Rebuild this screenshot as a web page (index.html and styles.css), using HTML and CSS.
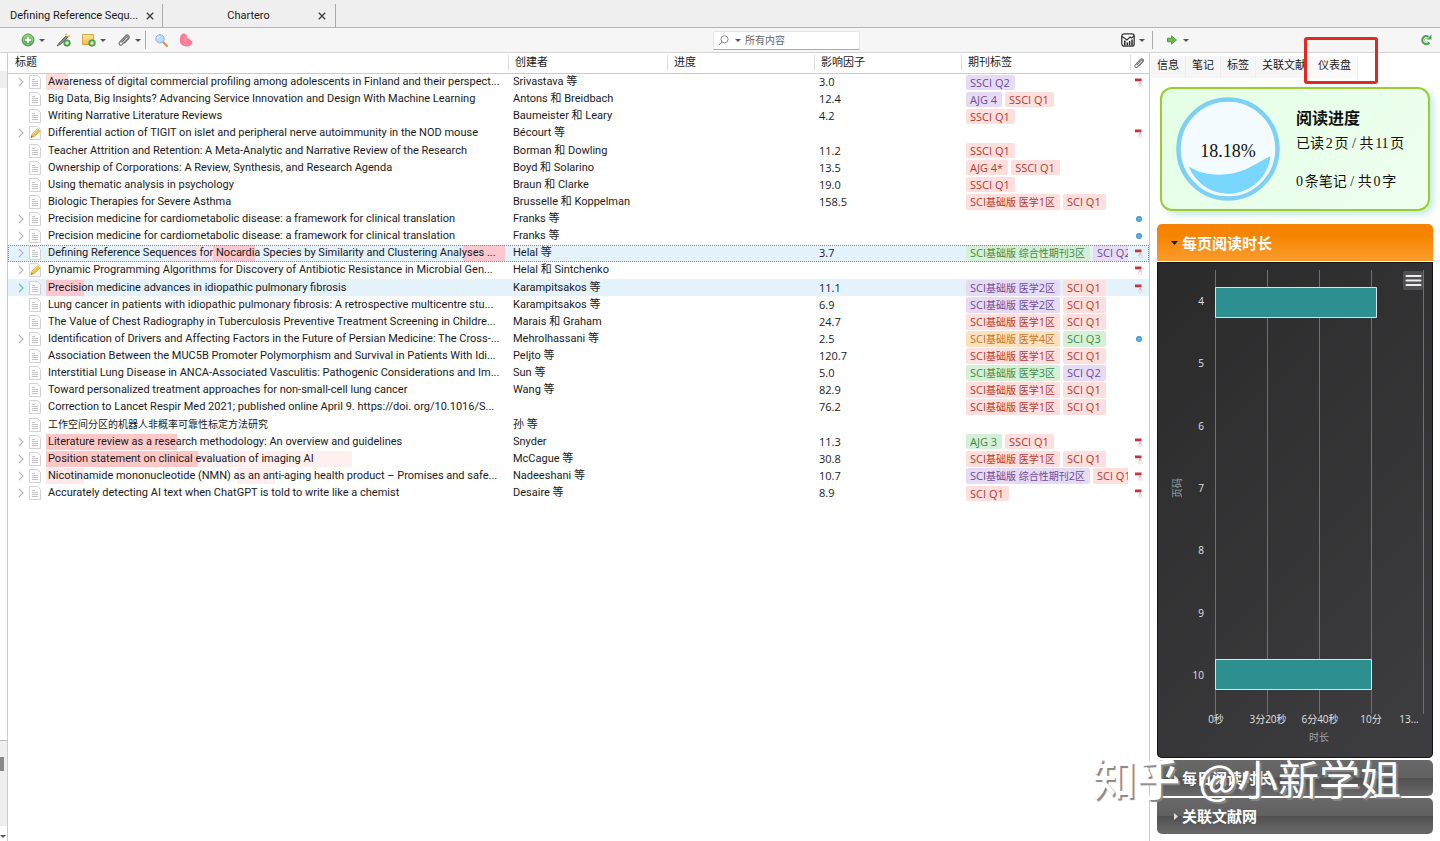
FILE: index.html
```html
<!DOCTYPE html>
<html lang="zh-CN">
<head>
<meta charset="utf-8">
<title>Chartero</title>
<link rel="stylesheet" href="styles.css">
</head>
<body>
<svg class="defs" aria-hidden="true">
  <defs>
    <linearGradient id="gGreen" x1="0" y1="0" x2="0" y2="1"><stop offset="0" stop-color="#8ccf7c"/><stop offset="1" stop-color="#3d9440"/></linearGradient>
    <linearGradient id="gNote" x1="0" y1="0" x2="0" y2="1"><stop offset="0" stop-color="#fbe9a4"/><stop offset="1" stop-color="#efbb45"/></linearGradient>
  </defs>
  <symbol id="doc" viewBox="0 0 12 14"><path d="M.5.5h8l3 3v10H.5z" fill="#fcfcfc" stroke="#d2d2d2"/><path d="M3 4.500h3M3 6.500h6M3 8.500h6M3 10.500h6" stroke="#c2c2c2"/></symbol>
  <symbol id="pen" viewBox="0 0 12 14"><path d="M.5.5h8l3 3v10H.5z" fill="#fbfbfb" stroke="#d2d2d2"/><path d="M2 11.500l1-3.500 5.500-5.500 2.500 2.500-5.500 5.500z" fill="#f3c044" stroke="#d9a744" stroke-width=".7"/><path d="M3.500 8.500l5.500-5.500" stroke="#fbe39a"/><path d="M2 11.500l1.800-.5-1.300-1.300z" fill="#555"/></symbol>
  <symbol id="chev" viewBox="0 0 6 10"><path d="M1 1l4 4-4 4" fill="none" stroke="currentColor" stroke-width="1.100"/></symbol>
  <symbol id="pdf" viewBox="0 0 8 10"><path d="M0 1.500h6.500v2.800H0z" fill="#c8343a"/><path d="M5 4.300c.3 1.700-.5 2.500-1.500 3.500M5 5c.5 1.500 1 2 2 2" fill="none" stroke="#ea9a9a" stroke-width=".9"/><path d="M3 9h5" stroke="#d4d4d4" stroke-width=".8"/></symbol>
  <symbol id="dot" viewBox="0 0 8 8"><circle cx="4" cy="4" r="3" fill="#3d9ad8"/><path d="M2.500 3.500h3M2.500 5h3" stroke="#a5d3f2" stroke-width=".7"/></symbol>
  <symbol id="clip" viewBox="0 0 14 14"><path d="M4.500 9.500l5-5.500c1-1 2.400.2 1.500 1.300l-6 6.400c-1.500 1.500-3.900-.6-2.500-2.200l6-6.700c2-2 5 .6 3.200 2.700l-4.200 4.700" fill="none" stroke="#777" stroke-width="1.200"/></symbol>
  <symbol id="close" viewBox="0 0 8 8"><path d="M.8.8l6.400 6.400M7.200.8L.8 7.200" stroke="#444" stroke-width="1.400"/></symbol>
</svg>

<nav class="tabs">
  <div class="tab tab-first"><a href="#ref">Defining Reference Sequ...</a><button aria-label="关闭"><svg width="8" height="8"><use href="#close"/></svg></button></div>
  <div class="tab"><a href="#chartero">Chartero</a><button aria-label="关闭"><svg width="8" height="8"><use href="#close"/></svg></button></div>
</nav>

<header class="toolbar">
  <div class="tools">
    <button class="tool menu" aria-label="新建条目"><svg width="14" height="14" viewBox="0 0 14 14"><circle cx="7" cy="7" r="6" fill="url(#gGreen)" stroke="#4c9a4c"/><circle cx="7" cy="7" r="4.500" fill="none" stroke="#b7e2ae" stroke-width=".7"/><path d="M7 4v6M4 7h6" stroke="#fff" stroke-width="1.800"/></svg></button>
    <button class="tool" aria-label="添加条目"><svg width="15" height="14" viewBox="0 0 15 14"><path d="M1 13l2-3 7-7 2 1-7 7z" fill="#8b8b7e" stroke="#555" stroke-width=".7"/><path d="M9 2l2-1.500M12 4l2-1.500" stroke="#e5c04b" stroke-width="1.300"/><circle cx="11" cy="10" r="3.300" fill="#5aae50" stroke="#3b8a3c" stroke-width=".7"/><path d="M11 8.200v3.600M9.200 10h3.600" stroke="#fff" stroke-width="1.100"/></svg></button>
    <button class="tool menu" aria-label="新建笔记"><svg width="14" height="14" viewBox="0 0 14 14"><path d="M.5 1.500h11v10H.5z" fill="url(#gNote)" stroke="#d8a63c"/><circle cx="10" cy="10" r="3.300" fill="#5aae50" stroke="#3b8a3c" stroke-width=".7"/><path d="M10 8.200v3.600M8.200 10h3.600" stroke="#fff" stroke-width="1.100"/></svg></button>
    <button class="tool menu" aria-label="添加附件"><svg width="14" height="14"><use href="#clip"/></svg></button>
    <span class="sep"></span>
    <button class="tool" aria-label="高级搜索"><svg width="13" height="13" viewBox="0 0 13 13"><path d="M8 8l4 4" stroke="#d59a52" stroke-width="2.400" stroke-linecap="round"/><circle cx="5" cy="4.800" r="4.200" fill="#b9dcf8" stroke="#8cb6e4"/><path d="M2.800 4.500c0-1.400 1-2 2.200-2" fill="none" stroke="#fff"/></svg></button>
    <button class="tool" aria-label="插件"><svg width="14" height="14" viewBox="0 0 14 14"><path d="M3.500.8C6.500-.2 8.500 2 8 5c2 .3 5.500 2.500 5.500 5-1.500 2.500-3.500 3.700-6 3.500C3.500 13.300.8 11 .8 7.500c0-3 .7-5.700 2.700-6.700z" fill="#fb7d97"/><path d="M8 5C6.500 5.500 5.500 7 6.500 9" stroke="#fda7b8" fill="none"/></svg></button>
  </div>
  <label class="search">
    <svg width="11" height="11" viewBox="0 0 11 11"><circle cx="6.500" cy="4.300" r="3.600" fill="none" stroke="#888"/><path d="M4 7L1 10" stroke="#888"/></svg>
    <span class="caret"></span>
    <input type="text" placeholder="所有内容" aria-label="所有内容">
  </label>
  <button class="tool menu stats" aria-label="仪表"><svg width="14" height="14" viewBox="0 0 14 14"><rect x=".8" y=".8" width="12.400" height="12.400" rx="2.500" fill="#fff" stroke="#333" stroke-width="1.300"/><path d="M1 3.500l5 3.500 3-3 1.500 1L13 3" fill="none" stroke="#333" stroke-width="1.200"/><path d="M3.800 12.500V7.500M6.300 12.500V9.500M8.600 12.500V8M11 12.500V6.500" stroke="#222" stroke-width="1.500"/></svg></button>
  <div class="side-tools">
    <button class="tool menu" aria-label="定位"><svg width="10" height="10" viewBox="0 0 10 10"><path d="M.5 3.200h4V.8L9.500 5 4.500 9.200V6.800h-4z" fill="#6cbb4d" stroke="#3f8a35" stroke-width=".8"/></svg></button>
    <button class="tool sync" aria-label="同步"><svg width="12" height="12" viewBox="0 0 12 12"><path d="M9.500 8.500A4 4 0 1 1 8.500 2.800" fill="none" stroke="#4fa356" stroke-width="2.200"/><path d="M6.500 5.500h5V.5z" fill="#4aa553"/><path d="M8 7.200a2 2 0 1 1-1-3" fill="none" stroke="#8ccf83"/></svg></button>
  </div>
</header>

<div class="workspace">
  <aside class="strip"><div class="strip-top"><i class="strip-mark"></i></div><div class="strip-tags"><i></i></div><div class="strip-foot"><span class="caret"></span></div></aside>

  <main class="items">
    <table>
      <colgroup><col><col class="c-creator"><col class="c-mid"><col class="c-mid"><col class="c-tags"><col class="c-att"></colgroup>
      <thead><tr><th>标题</th><th>创建者</th><th>进度</th><th>影响因子</th><th>期刊标签</th><th><svg width="12" height="12" aria-label="附件"><use href="#clip"/></svg></th></tr></thead>
      <tbody>
        <tr><td><div class="t"><svg class="chev"><use href="#chev"/></svg><svg class="doc"><use href="#doc"/></svg><span class="h1">Awareness of digital commercial profiling among adolescents in Finland and their perspect...</span></div></td><td>Srivastava 等</td><td></td><td>3.0</td><td><div class="g"><b class="p">SSCI Q2</b></div></td><td><svg class="pdf"><use href="#pdf"/></svg></td></tr>
        <tr><td><div class="t"><svg class="chev"></svg><svg class="doc"><use href="#doc"/></svg><span>Big Data, Big Insights? Advancing Service Innovation and Design With Machine Learning</span></div></td><td>Antons 和 Breidbach</td><td></td><td>12.4</td><td><div class="g"><b class="p">AJG 4</b><b class="r">SSCI Q1</b></div></td><td></td></tr>
        <tr><td><div class="t"><svg class="chev"></svg><svg class="doc"><use href="#doc"/></svg><span>Writing Narrative Literature Reviews</span></div></td><td>Baumeister 和 Leary</td><td></td><td>4.2</td><td><div class="g"><b class="r">SSCI Q1</b></div></td><td></td></tr>
        <tr><td><div class="t"><svg class="chev"><use href="#chev"/></svg><svg class="doc"><use href="#pen"/></svg><span>Differential action of TIGIT on islet and peripheral nerve autoimmunity in the NOD mouse</span></div></td><td>Bécourt 等</td><td></td><td></td><td></td><td><svg class="pdf"><use href="#pdf"/></svg></td></tr>
        <tr><td><div class="t"><svg class="chev"></svg><svg class="doc"><use href="#doc"/></svg><span>Teacher Attrition and Retention: A Meta-Analytic and Narrative Review of the Research</span></div></td><td>Borman 和 Dowling</td><td></td><td>11.2</td><td><div class="g"><b class="r">SSCI Q1</b></div></td><td></td></tr>
        <tr><td><div class="t"><svg class="chev"></svg><svg class="doc"><use href="#doc"/></svg><span>Ownership of Corporations: A Review, Synthesis, and Research Agenda</span></div></td><td>Boyd 和 Solarino</td><td></td><td>13.5</td><td><div class="g"><b class="r">AJG 4*</b><b class="r">SSCI Q1</b></div></td><td></td></tr>
        <tr><td><div class="t"><svg class="chev"></svg><svg class="doc"><use href="#doc"/></svg><span>Using thematic analysis in psychology</span></div></td><td>Braun 和 Clarke</td><td></td><td>19.0</td><td><div class="g"><b class="r">SSCI Q1</b></div></td><td></td></tr>
        <tr><td><div class="t"><svg class="chev"></svg><svg class="doc"><use href="#doc"/></svg><span>Biologic Therapies for Severe Asthma</span></div></td><td>Brusselle 和 Koppelman</td><td></td><td>158.5</td><td><div class="g"><b class="r">SCI<i>基础版 医学</i>1<i>区</i></b><b class="r">SCI Q1</b></div></td><td></td></tr>
        <tr><td><div class="t"><svg class="chev"><use href="#chev"/></svg><svg class="doc"><use href="#doc"/></svg><span>Precision medicine for cardiometabolic disease: a framework for clinical translation</span></div></td><td>Franks 等</td><td></td><td></td><td></td><td><svg class="dot"><use href="#dot"/></svg></td></tr>
        <tr><td><div class="t"><svg class="chev"><use href="#chev"/></svg><svg class="doc"><use href="#doc"/></svg><span>Precision medicine for cardiometabolic disease: a framework for clinical translation</span></div></td><td>Franks 等</td><td></td><td></td><td></td><td><svg class="dot"><use href="#dot"/></svg></td></tr>
        <tr class="sel focus"><td><div class="t"><svg class="chev"><use href="#chev"/></svg><svg class="doc"><use href="#doc"/></svg><span class="h2">Defining Reference Sequences for Nocardia Species by Similarity and Clustering Analyses ...</span></div></td><td>Helal 等</td><td></td><td>3.7</td><td><div class="g"><b class="n">SCI<i>基础版 综合性期刊</i>3<i>区</i></b><b class="p">SCI Q2</b></div></td><td><svg class="pdf"><use href="#pdf"/></svg></td></tr>
        <tr><td><div class="t"><svg class="chev"><use href="#chev"/></svg><svg class="doc"><use href="#pen"/></svg><span>Dynamic Programming Algorithms for Discovery of Antibiotic Resistance in Microbial Gen...</span></div></td><td>Helal 和 Sintchenko</td><td></td><td></td><td></td><td><svg class="pdf"><use href="#pdf"/></svg></td></tr>
        <tr class="sel"><td><div class="t"><svg class="chev blue"><use href="#chev"/></svg><svg class="doc"><use href="#doc"/></svg><span class="h3">Precision medicine advances in idiopathic pulmonary fibrosis</span></div></td><td>Karampitsakos 等</td><td></td><td>11.1</td><td><div class="g"><b class="p">SCI<i>基础版 医学</i>2<i>区</i></b><b class="r">SCI Q1</b></div></td><td><svg class="pdf"><use href="#pdf"/></svg></td></tr>
        <tr><td><div class="t"><svg class="chev"></svg><svg class="doc"><use href="#doc"/></svg><span>Lung cancer in patients with idiopathic pulmonary fibrosis: A retrospective multicentre stu...</span></div></td><td>Karampitsakos 等</td><td></td><td>6.9</td><td><div class="g"><b class="p">SCI<i>基础版 医学</i>2<i>区</i></b><b class="r">SCI Q1</b></div></td><td></td></tr>
        <tr><td><div class="t"><svg class="chev"></svg><svg class="doc"><use href="#doc"/></svg><span>The Value of Chest Radiography in Tuberculosis Preventive Treatment Screening in Childre...</span></div></td><td>Marais 和 Graham</td><td></td><td>24.7</td><td><div class="g"><b class="r">SCI<i>基础版 医学</i>1<i>区</i></b><b class="r">SCI Q1</b></div></td><td></td></tr>
        <tr><td><div class="t"><svg class="chev"><use href="#chev"/></svg><svg class="doc"><use href="#doc"/></svg><span>Identification of Drivers and Affecting Factors in the Future of Persian Medicine: The Cross-...</span></div></td><td>Mehrolhassani 等</td><td></td><td>2.5</td><td><div class="g"><b class="o">SCI<i>基础版 医学</i>4<i>区</i></b><b class="n">SCI Q3</b></div></td><td><svg class="dot"><use href="#dot"/></svg></td></tr>
        <tr><td><div class="t"><svg class="chev"></svg><svg class="doc"><use href="#doc"/></svg><span>Association Between the MUC5B Promoter Polymorphism and Survival in Patients With Idi...</span></div></td><td>Peljto 等</td><td></td><td>120.7</td><td><div class="g"><b class="r">SCI<i>基础版 医学</i>1<i>区</i></b><b class="r">SCI Q1</b></div></td><td></td></tr>
        <tr><td><div class="t"><svg class="chev"></svg><svg class="doc"><use href="#doc"/></svg><span>Interstitial Lung Disease in ANCA-Associated Vasculitis: Pathogenic Considerations and Im...</span></div></td><td>Sun 等</td><td></td><td>5.0</td><td><div class="g"><b class="n">SCI<i>基础版 医学</i>3<i>区</i></b><b class="p">SCI Q2</b></div></td><td></td></tr>
        <tr><td><div class="t"><svg class="chev"></svg><svg class="doc"><use href="#doc"/></svg><span>Toward personalized treatment approaches for non-small-cell lung cancer</span></div></td><td>Wang 等</td><td></td><td>82.9</td><td><div class="g"><b class="r">SCI<i>基础版 医学</i>1<i>区</i></b><b class="r">SCI Q1</b></div></td><td></td></tr>
        <tr><td><div class="t"><svg class="chev"></svg><svg class="doc"><use href="#doc"/></svg><span>Correction to Lancet Respir Med 2021; published online April 9. https://doi. org/10.1016/S...</span></div></td><td></td><td></td><td>76.2</td><td><div class="g"><b class="r">SCI<i>基础版 医学</i>1<i>区</i></b><b class="r">SCI Q1</b></div></td><td></td></tr>
        <tr><td><div class="t"><svg class="chev"></svg><svg class="doc"><use href="#doc"/></svg><span class="zh">工作空间分区的机器人非概率可靠性标定方法研究</span></div></td><td>孙 等</td><td></td><td></td><td></td><td></td></tr>
        <tr><td><div class="t"><svg class="chev"><use href="#chev"/></svg><svg class="doc"><use href="#doc"/></svg><span class="h4">Literature review as a research methodology: An overview and guidelines</span></div></td><td>Snyder</td><td></td><td>11.3</td><td><div class="g"><b class="n">AJG 3</b><b class="r">SSCI Q1</b></div></td><td><svg class="pdf"><use href="#pdf"/></svg></td></tr>
        <tr><td><div class="t"><svg class="chev"><use href="#chev"/></svg><svg class="doc"><use href="#doc"/></svg><span class="h5">Position statement on clinical evaluation of imaging AI</span></div></td><td>McCague 等</td><td></td><td>30.8</td><td><div class="g"><b class="r">SCI<i>基础版 医学</i>1<i>区</i></b><b class="r">SCI Q1</b></div></td><td><svg class="pdf"><use href="#pdf"/></svg></td></tr>
        <tr><td><div class="t"><svg class="chev"><use href="#chev"/></svg><svg class="doc"><use href="#doc"/></svg><span class="h6">Nicotinamide mononucleotide (NMN) as an anti-aging health product – Promises and safe...</span></div></td><td>Nadeeshani 等</td><td></td><td>10.7</td><td><div class="g"><b class="p">SCI<i>基础版 综合性期刊</i>2<i>区</i></b><b class="r">SCI Q1</b></div></td><td><svg class="pdf"><use href="#pdf"/></svg></td></tr>
        <tr><td><div class="t"><svg class="chev"><use href="#chev"/></svg><svg class="doc"><use href="#doc"/></svg><span>Accurately detecting AI text when ChatGPT is told to write like a chemist</span></div></td><td>Desaire 等</td><td></td><td>8.9</td><td><div class="g"><b class="r">SCI Q1</b></div></td><td><svg class="pdf"><use href="#pdf"/></svg></td></tr>
      </tbody>
    </table>
  </main>

  <aside class="side">
    <nav class="side-tabs"><a href="#info">信息</a><a href="#notes">笔记</a><a href="#tags">标签</a><a href="#related">关联文献</a><a href="#dash" class="active">仪表盘</a></nav>
    <section class="progress">
      <svg width="104" height="104" viewBox="0 0 104 104" role="img" aria-label="18.18%">
        <circle cx="52" cy="52" r="49.500" fill="#f4fbff" stroke="#7ed0f4" stroke-width="4.500"/>
        <path d="M12.700 69.500C28 79 46 79 60 75.500 74 72 84 64 94.600 59A42.500 42.500 0 0 1 12.700 69.500z" fill="#79d7ff"/>
        <text x="52" y="60" text-anchor="middle" class="pct">18.18%</text>
      </svg>
      <div class="progress-text"><h2>阅读进度</h2><p>已读2页 / 共11页</p><p>0条笔记 / 共0字</p></div>
    </section>
    <section class="accordion">
      <button class="head open"><svg width="7" height="4" viewBox="0 0 7 4"><path d="M0 0h7L3.500 4z" fill="#222"/></svg>每页阅读时长</button>
      <div class="panel">
        <svg class="chart" viewBox="0 0 276 496">
          <path d="M58.500 8v444M110.500 8v444M162.500 8v444M214.500 8v444M266.500 8v444" stroke="#707073"/>
          <g fill="#2b908f" stroke="#e0e0e3"><path d="M58.500 25.500h161v30h-161zM58.500 397.500h156v30h-156z"/></g>
          <g class="axis" text-anchor="end"><text x="47" y="43">4</text><text x="47" y="105">5</text><text x="47" y="168">6</text><text x="47" y="230">7</text><text x="47" y="292">8</text><text x="47" y="355">9</text><text x="47" y="417">10</text></g>
          <g class="axis" text-anchor="middle"><text x="59" y="461">0秒</text><text x="111" y="461">3分20秒</text><text x="163" y="461">6分40秒</text><text x="214" y="461">10分</text><text x="252" y="461">13...</text></g>
          <text class="axis-title" text-anchor="middle" x="162" y="479">时长</text>
          <text class="axis-title" text-anchor="middle" transform="translate(24 226) rotate(-90)">页码</text>
          <rect x="246" y="9" width="20" height="19" rx="2" fill="#505053"/>
          <path d="M249.500 14h14M249.500 18.500h14M249.500 23h14" stroke="#eee" stroke-width="2" stroke-linecap="round"/>
        </svg>
      </div>
      <button class="head"><svg width="4" height="7" viewBox="0 0 4 7"><path d="M0 0v7l4-3.500z" fill="#ddd"/></svg>每日阅读时长</button>
      <button class="head"><svg width="4" height="7" viewBox="0 0 4 7"><path d="M0 0v7l4-3.500z" fill="#ddd"/></svg>关联文献网</button>
    </section>
  </aside>
</div>
<div class="watermark"><b>知乎</b><span>@小新学姐</span></div>
</body>
</html>
```
FILE: styles.css
```css
*, ::before, ::after { box-sizing: border-box; }
body { margin: 0; min-height: 100vh; display: flex; flex-direction: column; position: relative; overflow: hidden; background: #fff; color: #1a1a1a; font: 11px/16px Roboto, "Noto Sans CJK SC", sans-serif; }
button { border: 0; padding: 0; background: none; font: inherit; color: inherit; }
a { color: inherit; text-decoration: none; }
svg { display: block; flex: none; }
.defs { position: absolute; width: 0; height: 0; }

.tabs { display: flex; height: 28px; padding-top: 4px; background: #efefef; border-bottom: 1px solid #b4b4b4; }
.tab { display: flex; align-items: center; width: 173px; padding: 0 9px 0 8px; border-right: 1px solid #aaa; }
.tab-first { width: 163px; padding: 0 8px 0 10px; }
.tab a { flex: 1; padding-left: 8px; text-align: center; white-space: nowrap; }
.tab-first a { padding: 0; text-align: left; }

.toolbar { display: flex; align-items: center; height: 25px; background: #f6f6f6; border-bottom: 1px solid #d4d4d4; }
.tools { display: flex; align-items: center; gap: 11px; padding-left: 21px; }
.tool { display: flex; align-items: center; gap: 4px; }
.menu::after, .caret { content: ""; width: 6px; border: 3px solid transparent; border-top-color: #555; border-bottom: 0; }
.sep { width: 1px; height: 18px; margin: 0 -2px 0 -7px; background: #aaa; }
.search { display: flex; align-items: center; gap: 6px; width: 147px; height: 19px; margin-left: auto; padding: 0 4px; background: #fff; border: 1px solid #e6e6e6; border-bottom-color: #aaa; }
.search input { flex: 1; min-width: 0; border: 0; padding: 0; background: none; outline: 0; font: 10px/15px "Open Sans", "Noto Sans CJK SC", sans-serif; margin-left: -2px; }
.search input::placeholder { color: #666; opacity: 1; }
.stats { margin-left: 261px; width: 31px; }
.side-tools { display: flex; align-items: center; justify-content: space-between; width: 288px; height: 18px; padding: 0 8px 0 14px; border-left: 1px solid #aaa; }
.side-tools .menu { gap: 6px; }

.workspace { flex: 1; display: flex; }
.strip { width: 8px; display: flex; flex-direction: column; border-right: 1px solid #ccc; }
.strip-top { flex: 1; padding-top: 18px; }
.strip-mark { display: block; height: 17px; background: #eee; }
.strip-tags { height: 86px; padding-top: 16px; background: #eee; border-top: 1px solid #bbb; }
.strip-tags i { display: block; width: 4px; height: 14px; background: #888; }
.strip-foot { height: 15px; padding-top: 9px; }
.strip-foot .caret { display: block; }

.items { flex: 1; min-width: 0; }
table { width: 100%; height: 449px; table-layout: fixed; border-collapse: collapse; }
.c-creator { width: 159px; }
.c-mid { width: 147px; }
.c-tags { width: 169px; }
.c-att { width: 19px; }
th { height: 20px; padding: 0 0 0 7px; text-align: left; font-weight: 400; border-bottom: 1px solid #ccc; background: linear-gradient(#ddd, #ddd) left center / 1px 15px no-repeat; }
th:first-child { background: none; }
th:last-child { padding: 0 0 0 3px; }
td { padding: 0 0 0 5px; white-space: nowrap; }
td:first-child { padding: 0 3px 0 0; }
td:nth-child(4) { font-family: "Open Sans", sans-serif; }
.t { display: flex; align-items: center; }
.t span { flex: 1; min-width: 0; padding-left: 2px; }
.zh { font-size: 10px; }
.chev { width: 6px; height: 10px; margin: 0 5px 0 10px; color: #b4b4b4; }
.blue { color: #5db8e8; }
.doc { width: 12px; height: 14px; margin-right: 5px; }
.pdf { width: 8px; height: 10px; }
.dot { width: 8px; height: 8px; }
.h1 { background: linear-gradient(90deg, #ffdcdc 22px, transparent 22px); }
.h2 { background: linear-gradient(90deg, transparent 122px, #f0e6f2 122px 167px, #fbc8d0 167px 209px, transparent 209px 417px, #fbc8d0 417px); }
.h3 { background: linear-gradient(90deg, #fbc8d0 38px, transparent 38px); }
.h4 { background: linear-gradient(90deg, #ffc8c8 131px, transparent 131px); }
.h5 { background: linear-gradient(90deg, #ffc8c8 152px, #fff0f0 152px 306px, transparent 306px); }
.h6 { background: linear-gradient(90deg, #ffe8e8 38px, transparent 38px 191px, #ffeeee 191px 229px, transparent 229px); }
.sel { background: #e4f2fc; }
.focus { outline: 1px dotted #4f9ba8; outline-offset: -1px; }
.g { display: flex; gap: 3px; margin-right: 2px; overflow: hidden; }
.g b { flex: none; padding: 0 5px 0 4px; border-radius: 2px; font: 11px/15px "Open Sans", "Noto Sans CJK SC", sans-serif; }
.g i { font-style: normal; font-size: 10px; }
.r { background: #fddfdd; color: #b03a32; }
.p { background: #e5dcf3; color: #704a98; }
.n { background: #d5f0d6; color: #3f8b47; }
.o { background: #fde0bd; color: #c07428; }

.side { width: 291px; padding: 3px 7px 0; border-left: 1px solid #ccc; }
.side-tabs { display: flex; margin: 0 0 9px -6px; }
.side-tabs a { padding: 1px 6px 3px; line-height: 18px; background: #f6f6f6; border-right: 1px solid #eee; }
.side-tabs .active { position: relative; margin-left: -1px; background: #fafafa; }
.side-tabs .active::after { content: ""; position: absolute; left: -8px; top: -19px; width: 74px; height: 47px; border: 3px solid #e02a20; border-radius: 3px; }
.progress { display: flex; align-items: center; gap: 16px; height: 124px; margin: 0 3px 13px; padding-left: 14px; background: linear-gradient(135deg, #e4ffe6, #efffef); border: 2px solid #9acd32; border-radius: 12px; box-shadow: 4px 4px 6px #c9ece4; color: #111; }
.pct { font: 18px "Liberation Serif", serif; fill: #111; }
.progress h2 { margin: 0 0 7px; font: 700 16px/20px "Noto Sans CJK SC", sans-serif; }
.progress p { margin: 0 0 18px; font: 14px/20px "Liberation Serif", "Noto Sans CJK SC", serif; text-autospace: normal; white-space: nowrap; }
.progress p:last-child { margin: 0; }
.accordion { display: flex; flex-direction: column; gap: 1px; }
.head { display: flex; align-items: center; gap: 4px; height: 37px; padding-left: 14px; border-radius: 5px; background: linear-gradient(#696969, #606060 50%, #505050 50%, #6a6a6a); color: #fff; font: 700 15px/20px "Noto Sans CJK SC", sans-serif; }
.head:not(.open) { height: 36px; margin-top: 1px; padding-left: 17px; }
.open { background: linear-gradient(#f68400 30%, #fa9c2c); border-radius: 5px 5px 0 0; }
.panel { background: linear-gradient(135deg, #2a2a2b, #3e3e40); box-shadow: inset 0 0 0 1px #151515; border-radius: 0 0 5px 5px; }
.chart { width: 100%; }
.axis { font: 10px "Open Sans", "Noto Sans CJK SC", sans-serif; fill: #e0e0e3; }
.axis-title { font: 10px "Noto Sans CJK SC", sans-serif; fill: #a0a0a3; }

.watermark { position: absolute; right: 39px; bottom: 34px; display: flex; gap: 18px; color: #fff; font: 41px/60px "Noto Sans CJK SC", sans-serif; text-shadow: 2px 2px 1px #888; pointer-events: none; }
.watermark b { font-size: 44px; font-weight: 500; }
```
